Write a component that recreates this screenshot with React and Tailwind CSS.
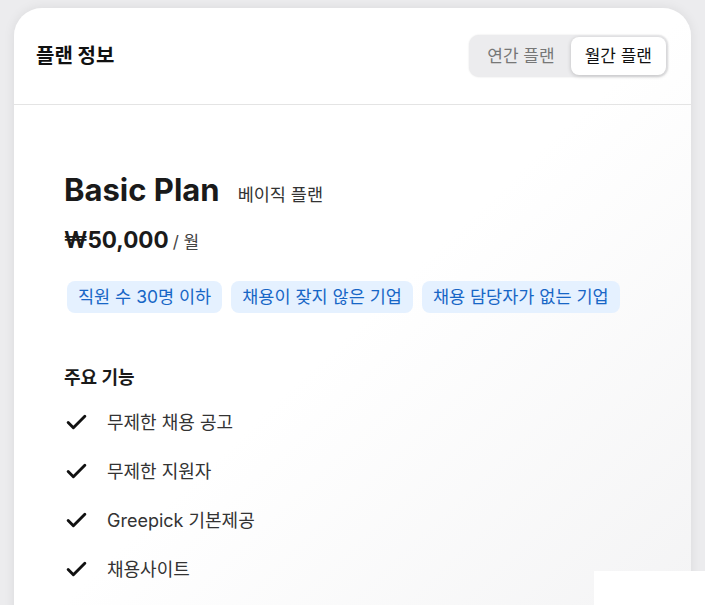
import { Check } from 'lucide-react';

const tags = ['직원 수 30명 이하', '채용이 잦지 않은 기업', '채용 담당자가 없는 기업'];
const features = ['무제한 채용 공고', '무제한 지원자', 'Greepick 기본제공', '채용사이트'];

export default function App() {
  return (
    <div
      className="relative h-[605px] w-[705px] overflow-hidden bg-[#ececee] pl-[14px] pr-[14px] pt-[8px]"
      style={{ fontFamily: 'Inter, "Noto Sans CJK KR", sans-serif' }}
    >
      <div className="h-[640px] rounded-t-[28px] bg-gradient-to-br from-white via-white to-[#f3f3f4] shadow-[0_0_12px_rgba(0,0,0,0.08)]">
        <div className="flex h-[97px] items-center justify-between border-b border-[#e4e4e4] pl-[22px] pr-[23px]">
          <h2 className="text-[20px] font-bold text-[#111]">플랜 정보</h2>
          <div className="flex items-center rounded-[10px] bg-[#ececee] p-[2px] shadow-[0_0_2px_rgba(0,0,0,0.12)]">
            <button className="px-[16px] py-[7px] text-[17px] leading-[24px] text-[#777]">연간 플랜</button>
            <button className="rounded-[8px] bg-white px-[14px] py-[7px] text-[17px] leading-[24px] text-[#111] shadow-[0_1px_4px_rgba(0,0,0,0.2)]">
              월간 플랜
            </button>
          </div>
        </div>

        <div className="pl-[50px] pt-[66px]">
          <div className="flex items-baseline gap-[18px]">
            <h1 className="text-[31px] font-bold leading-[38px] text-[#1a1a1a]">Basic Plan</h1>
            <span className="text-[17.5px] text-[#333]">베이직 플랜</span>
          </div>
          <div className="mt-[16px] flex items-baseline gap-[4px]">
            <span className="text-[22.5px] font-bold leading-[30px] text-[#1a1a1a]">₩50,000</span>
            <span className="text-[17px] text-[#444]">/ 월</span>
          </div>

          <div className="mt-[25px] flex gap-[9px] pl-[3px]">
            {tags.map((t) => (
              <span
                key={t}
                className="rounded-[8px] bg-[#e5f1ff] px-[11px] py-[4px] text-[17.5px] leading-[24px] text-[#1766c6]"
              >
                {t}
              </span>
            ))}
          </div>

          <h3 className="mt-[51px] text-[18px] font-bold leading-[27px] text-[#1a1a1a]">주요 기능</h3>
          <ul className="mt-[18px] flex flex-col gap-[21px]">
            {features.map((f) => (
              <li key={f} className="flex items-center gap-[18px]">
                <Check className="h-[25px] w-[25px] text-[#111]" strokeWidth={2.8} />
                <span className="text-[18px] leading-[28px] text-[#333]">{f}</span>
              </li>
            ))}
          </ul>
        </div>
      </div>

      <div className="absolute bottom-0 right-0 h-[34px] w-[111px] bg-white" />
    </div>
  );
}
